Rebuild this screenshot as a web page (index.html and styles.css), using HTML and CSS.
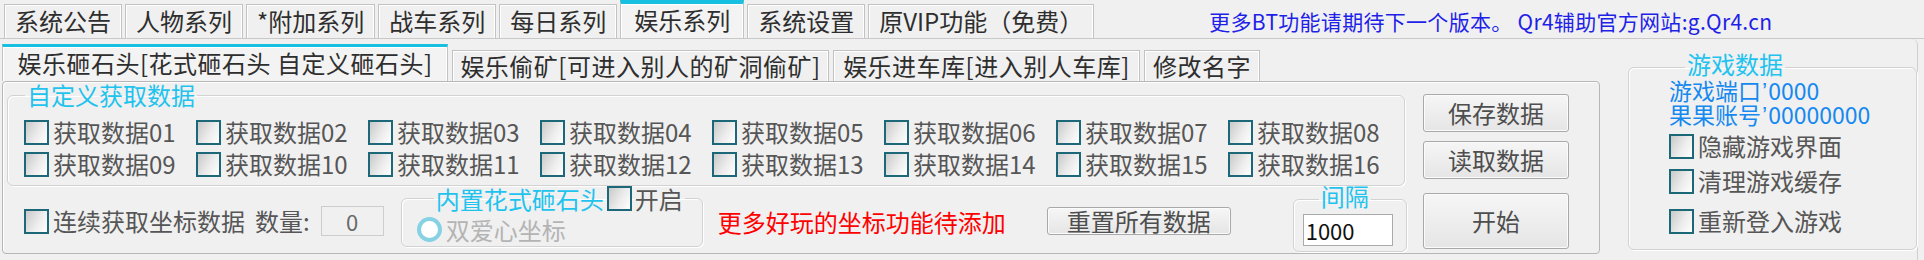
FILE: index.html
```html
<!DOCTYPE html>
<html lang="zh-CN">
<head>
<meta charset="utf-8">
<title>娱乐系列</title>
<link rel="stylesheet" href="styles.css">
</head>
<body>
<div class="app">
  <header class="top-bar">
    <nav class="top-tabs">
      <div class="ttab">系统公告</div>
      <div class="ttab">人物系列</div>
      <div class="ttab">*附加系列</div>
      <div class="ttab">战车系列</div>
      <div class="ttab">每日系列</div>
      <div class="ttab active">娱乐系列</div>
      <div class="ttab">系统设置</div>
      <div class="ttab">原VIP功能（免费）</div>
    </nav>
    <div class="notice">更多BT功能请期待下一个版本。 Qr4辅助官方网站:g.Qr4.cn</div>
  </header>
  <main class="page">
    <section class="sub">
      <nav class="sub-tabs">
        <div class="stab active s1">娱乐砸石头[花式砸石头 自定义砸石头]</div>
        <div class="stab s2">娱乐偷矿[可进入别人的矿洞偷矿]</div>
        <div class="stab s3">娱乐进车库[进入别人车库]</div>
        <div class="stab s4">修改名字</div>
      </nav>
      <div class="sub-body">
        <div class="left-col">
          <fieldset class="group custom">
            <legend>自定义获取数据</legend>
            <div class="grid">
              <label class="chk"><span class="box"></span>获取数据01</label>
              <label class="chk"><span class="box"></span>获取数据02</label>
              <label class="chk"><span class="box"></span>获取数据03</label>
              <label class="chk"><span class="box"></span>获取数据04</label>
              <label class="chk"><span class="box"></span>获取数据05</label>
              <label class="chk"><span class="box"></span>获取数据06</label>
              <label class="chk"><span class="box"></span>获取数据07</label>
              <label class="chk"><span class="box"></span>获取数据08</label>
              <label class="chk"><span class="box"></span>获取数据09</label>
              <label class="chk"><span class="box"></span>获取数据10</label>
              <label class="chk"><span class="box"></span>获取数据11</label>
              <label class="chk"><span class="box"></span>获取数据12</label>
              <label class="chk"><span class="box"></span>获取数据13</label>
              <label class="chk"><span class="box"></span>获取数据14</label>
              <label class="chk"><span class="box"></span>获取数据15</label>
              <label class="chk"><span class="box"></span>获取数据16</label>
            </div>
          </fieldset>
          <div class="bottom-row">
            <label class="chk cont"><span class="box"></span>连续获取坐标数据</label>
            <span class="qty">数量:</span>
            <span class="field disabled">0</span>
            <fieldset class="group fancy">
              <legend><span class="legend-line"><span class="t">内置花式砸石头</span><label class="chk small"><span class="box"></span>开启</label></span></legend>
              <label class="radio"><span class="dot"></span>双爱心坐标</label>
            </fieldset>
            <span class="hint">更多好玩的坐标功能待添加</span>
            <button class="btn reset">重置所有数据</button>
            <fieldset class="group interval">
              <legend>间隔</legend>
              <span class="field val">1000</span>
            </fieldset>
          </div>
        </div>
        <div class="right-col">
          <button class="btn act">保存数据</button>
          <button class="btn act">读取数据</button>
          <button class="btn act big">开始</button>
        </div>
      </div>
    </section>
    <aside class="side">
      <fieldset class="group game">
        <legend>游戏数据</legend>
        <div class="info first">游戏端口<span class="q">’</span>0000</div>
        <div class="info second">果果账号<span class="q">’</span>00000000</div>
        <label class="chk g1"><span class="box"></span>隐藏游戏界面</label>
        <label class="chk g2"><span class="box"></span>清理游戏缓存</label>
        <label class="chk g3"><span class="box"></span>重新登入游戏</label>
      </fieldset>
    </aside>
  </main>
</div>
</body>
</html>
```

FILE: styles.css
```css
* { box-sizing: border-box; }

body {
  margin: 0;
  width: 1924px;
  height: 260px;
  overflow: hidden;
  background: #f0f0f0;
  font-family: "Noto Sans CJK SC", "Noto Sans", sans-serif;
  font-size: 24px;
  color: #333;
}

/* ---------- top tabs ---------- */
.top-bar {
  display: flex;
  align-items: flex-end;
  height: 38px;
}
.top-tabs {
  display: flex;
  align-items: flex-end;
  gap: 3px;
  padding-left: 4px;
}
.ttab {
  height: 34px;
  padding: 0 10px;
  line-height: 32px;
  white-space: nowrap;
  border: 1px solid #c2c2c2;
  border-bottom: none;
  box-shadow: inset 1px 1px 0 #fff, inset -1px 0 0 #fff;
  background: #f0f0f0;
  color: #2e2e2e;
}
.ttab.active {
  height: 38px;
  padding: 0 13px;
  border-top: 4px solid #17bfe0;
  background: #f3f3f3;
}
.notice {
  flex: none;
  align-self: center;
  margin: 4px 0 0 115px;
  font-size: 21px;
  line-height: 26px;
  letter-spacing: 0.3px;
  color: #1f1fe8;
  white-space: nowrap;
}

/* ---------- page ---------- */
.page {
  display: flex;
  height: 222px;
  border-top: 1px solid #c8c8c8;
}
.sub {
  width: 1600px;
  margin-top: 5px;
  display: flex;
  flex-direction: column;
}
.sub-tabs {
  display: flex;
  align-items: flex-end;
  gap: 4px;
  height: 37px;
  padding-left: 2px;
}
.stab {
  height: 31px;
  line-height: 29px;
  text-align: center;
  white-space: nowrap;
  letter-spacing: 0.5px;
  border: 1px solid #c2c2c2;
  border-bottom: none;
  box-shadow: inset 1px 1px 0 #fff, inset -1px 0 0 #fff;
  color: #2e2e2e;
}
.stab.active {
  height: 37px;
  line-height: 32px;
  border-top: 3px solid #17bfe0;
  background: #f3f3f3;
}
.s1 { width: 446px; }
.s2 { width: 377px; }
.s3 { width: 307px; }
.s4 { width: 116px; }

.sub-body {
  display: flex;
  height: 173px;
  margin-left: 2px;
  border: 1px solid #b6b6b6;
  border-radius: 4px;
  box-shadow: inset 1px 1px 0 #fff;
}
.left-col {
  flex: none;
  width: 1402px;
  display: flex;
  flex-direction: column;
}

/* ---------- group boxes ---------- */
.group {
  margin: 0;
  padding: 0;
  min-width: 0;
  border: 1px solid #d2d2d2;
  border-radius: 6px;
  box-shadow: inset 1px 1px 0 #fff, 1px 1px 0 #fff;
}
.group > legend {
  padding: 0 2px;
  color: #1fc3ee;
  line-height: 24px;
}
.custom {
  margin: 1px 0 0 4px;
}
.custom > legend { margin-left: 17px; }
.grid {
  display: grid;
  grid-template-columns: repeat(8, 172px);
  padding: 9px 0 5px 16px;
}

/* ---------- checkbox / radio ---------- */
.chk {
  display: flex;
  align-items: center;
  gap: 4px;
  height: 32px;
  line-height: 32px;
  color: #565656;
  white-space: nowrap;
}
.box {
  flex: none;
  width: 25px;
  height: 25px;
  border: 2px solid #1c6878;
  background: linear-gradient(120deg, #c9c9c9 0%, #ececec 55%, #ffffff 100%);
}
.radio {
  display: flex;
  align-items: center;
  gap: 4px;
  height: 25px;
  line-height: 25px;
  color: #b4b4b4;
  white-space: nowrap;
}
.dot {
  flex: none;
  width: 25px;
  height: 25px;
  border-radius: 50%;
  border: 4px solid #86d2e4;
  background: #fff;
}

/* ---------- bottom row ---------- */
.bottom-row {
  display: flex;
  align-items: flex-start;
  height: 66px;
}
.bottom-row > * { flex: none; }
.cont { margin: 19px 0 0 21px; }
.qty {
  margin: 19px 0 0 10px;
  line-height: 32px;
  color: #565656;
  white-space: nowrap;
}
.field {
  display: block;
  font-size: 22px;
}
.field.disabled {
  margin: 20px 0 0 11px;
  width: 63px;
  height: 30px;
  line-height: 28px;
  text-align: center;
  border: 1px solid #cdcdcd;
  color: #6a6a6a;
}
.fancy {
  margin: 0 0 0 17px;
  width: 302px;
  height: 61px;
  padding: 6px 0 0 15px;
}
.fancy > legend {
  margin-left: 17px;
  line-height: 25px;
}
.legend-line {
  display: flex;
  align-items: center;
  gap: 3px;
}
.legend-line .t { color: #1fc3ee; }
.chk.small { height: 25px; line-height: 25px; gap: 3px; }

.hint {
  margin: 20px 0 0 15px;
  line-height: 32px;
  color: #ff0000;
  white-space: nowrap;
}

.btn {
  font-family: inherit;
  font-size: 24px;
  color: #4e4e4e;
  padding: 0;
  border: 1px solid #a9a9a9;
  border-radius: 3px;
  background: linear-gradient(#f6f6f6, #e5e5e5);
  box-shadow: inset 0 0 0 1px #fbfbfb;
}
.reset {
  margin: 21px 0 0 41px;
  width: 184px;
  height: 28px;
  line-height: 24px;
}
.interval {
  margin: -2px 0 0 62px;
  width: 114px;
  height: 68px;
  padding: 0 0 0 9px;
}
.interval > legend {
  margin-left: 16px;
  padding-bottom: 6px;
}
.field.val {
  width: 90px;
  height: 32px;
  line-height: 30px;
  padding-left: 2px;
  background: #fff;
  border: 1px solid #aaaaaa;
  color: #111;
}

/* ---------- right column ---------- */
.right-col {
  display: flex;
  flex-direction: column;
  gap: 9px;
  width: 146px;
  margin-left: 18px;
  padding-top: 12px;
}
.act { height: 38px; line-height: 34px; }
.act.big { height: 56px; margin-top: 5px; }

/* ---------- side panel ---------- */
.side {
  flex: 1;
  margin-right: 6px;
  padding-left: 28px;
  border-right: 1px solid #cfcfcf;
  border-top-right-radius: 6px;
}
.game {
  margin-top: 15px;
  width: 289px;
  height: 196px;
  padding: 0 0 0 40px;
}
.game > legend {
  margin-left: 16px;
  line-height: 20px;
  padding-bottom: 6px;
}
.info {
  height: 22px;
  font-size: 23px;
  line-height: 22px;
  color: #1589ef;
  white-space: nowrap;
}
.info .q {
  font-family: "Liberation Sans", sans-serif;
  line-height: 0;
  margin: 0 1px;
}
.info.first { margin-top: -1px; }
.info.second { margin-top: 2px; }
.g1 { margin-top: 5px; }
.g2 { margin-top: 3px; }
.g3 { margin-top: 8px; }
```
